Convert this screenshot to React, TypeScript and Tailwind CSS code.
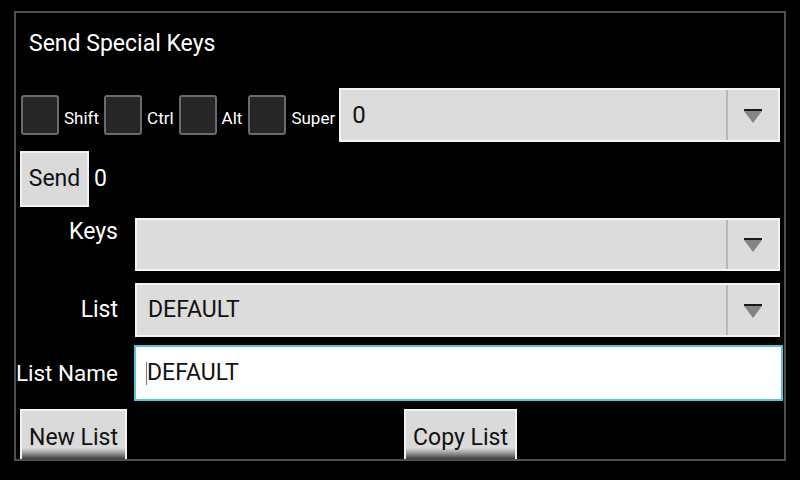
import React from "react";

const font = { fontFamily: "Roboto, 'Noto Sans', sans-serif" };

function Arrow() {
  return (
    <svg width="20" height="16" viewBox="0 0 20 16">
      <polygon points="1,3 19,3 10,15" fill="#858585" />
      <rect x="1" y="1" width="18" height="2" fill="#1a1a1a" />
    </svg>
  );
}

function Spinner({ text, h, textCls }: { text: string; h: string; textCls?: string }) {
  return (
    <div className={`flex-1 flex ${h} bg-[#dcdcdc] border-2 border-[#f4f4f4]`}>
      <div className={`flex-1 flex items-center pl-[11px] text-[#111] ${textCls ?? "text-[23px]"}`}>{text}</div>
      <div className="w-[2px] bg-[#b8b8b8]" />
      <div className="w-[50px] flex items-center justify-center pt-[1px]">
        <Arrow />
      </div>
    </div>
  );
}

function Check() {
  return <div className="w-[38px] h-[40px] shrink-0 rounded-[3px] border-2 border-[#6a6a6a] bg-[#262626]" />;
}

function GButton({ label, w }: { label: string; w: string }) {
  return (
    <div
      className={`${w} h-[52px] border-2 border-b-0 border-[#f2f2f2] text-[23px] text-[#111] flex justify-center pt-[14px] leading-[26px] bg-[linear-gradient(to_bottom,#dadada_0%,#dadada_74%,#9a9a9a_84%,#1e1e1e_100%)]`}
    >
      {label}
    </div>
  );
}

export default function App() {
  return (
    <div className="w-[800px] h-[480px] bg-black pt-[11px] pl-[14px]" style={font}>
      <div className="w-[772px] h-[450px] border-2 border-[#505050] overflow-hidden flex flex-col text-white [&>*]:shrink-0">
        <div className="pl-[13px] pt-[18px] text-[23px] leading-[26px] h-[75px]">Send Special Keys</div>
        <div className="flex items-center h-[54px] pl-[5px] pr-[4px] text-[17px]">
          <Check />
          <span className="ml-[5px] mr-[5px] mt-[7px]">Shift</span>
          <Check />
          <span className="ml-[5px] mr-[5px] mt-[7px]">Ctrl</span>
          <Check />
          <span className="ml-[5px] mr-[6px] mt-[7px]">Alt</span>
          <Check />
          <span className="ml-[5px] mr-[4px] mt-[7px]">Super</span>
          <Spinner text="0" h="h-[54px]" textCls="text-[24px] pl-[9px]" />
        </div>
        <div className="flex items-center mt-[9px] pl-[4px]">
          <div className="w-[69px] h-[56px] bg-[#dadada] border-2 border-[#f2f2f2] text-[23px] text-[#111] flex items-center justify-center">
            Send
          </div>
          <span className="ml-[5px] text-[23px]">0</span>
        </div>
        <div className="flex items-start mt-[11px] pr-[4px]">
          <div className="w-[102px] text-right text-[23px] leading-[26px] pt-[1px]">Keys</div>
          <div className="ml-[17px] flex-1 flex">
            <Spinner text="" h="h-[53px]" />
          </div>
        </div>
        <div className="flex items-center mt-[12px] pr-[4px]">
          <div className="w-[102px] text-right text-[23px] leading-[26px]">List</div>
          <div className="ml-[17px] flex-1 flex">
            <Spinner text="DEFAULT" h="h-[54px]" />
          </div>
        </div>
        <div className="flex items-center mt-[8px] pr-[1px]">
          <div className="w-[102px] flex justify-end whitespace-nowrap text-[22.5px] leading-[26px]">List Name</div>
          <div className="ml-[16px] flex-1 h-[56px] bg-white border-2 border-[#55c3dc] flex items-center pl-[10px] text-[23px] text-[#111]">
            <span className="w-[1px] h-[23px] bg-[#777]" />
            <span>DEFAULT</span>
          </div>
        </div>
        <div className="grid grid-cols-2 mt-[8px]">
          <div className="pl-[4px]">
            <GButton label="New List" w="w-[107px]" />
          </div>
          <div className="pl-[4px]">
            <GButton label="Copy List" w="w-[113px]" />
          </div>
        </div>
      </div>
    </div>
  );
}
